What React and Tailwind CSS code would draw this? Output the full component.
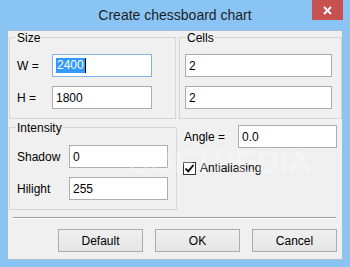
import React from "react";

const font = { fontFamily: '"Liberation Sans", Arial, sans-serif' };

const GroupBox = ({ label, className, children }) => (
  <div className={`relative border border-[#d5d5d5] ${className}`}>
    <span className="absolute left-[6px] top-[-7px] bg-[#f0f0f0] px-[1px] text-[12px] leading-[14px] text-black">
      {label}
    </span>
    {children}
  </div>
);

const Field = ({ value, className = "", focused = false }) => (
  <div
    className={`flex h-[23px] items-center bg-white pl-[3px] text-[12px] text-black border ${
      focused ? "border-[#7eb4ea]" : "border-[#abadb3]"
    } ${className}`}
  >
    {focused ? (
      <span className="flex items-center">
        <span className="bg-[#3399ff] px-[1px] leading-[15px] text-white">{value}</span>
        <span className="h-[15px] w-[1px] bg-black" />
      </span>
    ) : (
      value
    )}
  </div>
);

const Button = ({ children }) => (
  <button className="flex h-[23px] w-[85px] items-center justify-center border border-[#acacac] bg-gradient-to-b from-[#f0f0f0] to-[#e5e5e5] text-[12px] text-black">
    {children}
  </button>
);

export default function App() {
  return (
    <div style={font} className="relative h-[267px] w-[350px] overflow-hidden bg-[#8ac4f5]">
      {/* title bar */}
      <div className="flex h-[30px] items-start">
        <div className="w-[43px]" />
        <div className="flex-1 pt-[6px] text-center text-[14px] leading-[18px] text-[#1e1e1e]">
          Create chessboard chart
        </div>
        <div className="ml-[5px] mr-[7px] flex h-[20px] w-[31px] items-center justify-center bg-[#c75050]">
          <svg width="9" height="9" viewBox="0 0 9 9">
            <path d="M1 1L8 8M8 1L1 8" stroke="white" strokeWidth="1.8" />
          </svg>
        </div>
      </div>

      {/* client area */}
      <div className="mx-[7px] h-[230px] border border-[#a7bdd2] bg-[#f0f0f0]">
        <div className="mt-[6px] flex gap-[3px] pl-[1px]">
          <GroupBox label="Size" className="h-[82px] w-[167px] pt-[16px] pl-[7px]">
            <div className="flex items-center">
              <span className="w-[35px] text-[12px]">W =</span>
              <Field value="2400" focused className="w-[100px]" />
            </div>
            <div className="mt-[9px] flex items-center">
              <span className="w-[35px] text-[12px]">H =</span>
              <Field value="1800" className="w-[100px]" />
            </div>
          </GroupBox>
          <GroupBox label="Cells" className="h-[82px] w-[163px] pt-[16px] pl-[5px]">
            <Field value="2" className="w-[147px]" />
            <Field value="2" className="mt-[9px] w-[147px]" />
          </GroupBox>
        </div>

        <div className="mt-[8px] flex pl-[1px]">
          <GroupBox label="Intensity" className="h-[83px] w-[168px] pt-[17px] pl-[7px]">
            <div className="flex items-center">
              <span className="w-[52px] text-[12px]">Shadow</span>
              <Field value="0" className="w-[99px]" />
            </div>
            <div className="mt-[9px] flex items-center">
              <span className="w-[52px] text-[12px]">Hilight</span>
              <Field value="255" className="w-[99px]" />
            </div>
          </GroupBox>
          <div className="ml-[6px]">
            <div className="-mt-[2px] flex items-center">
              <span className="w-[55px] pl-[1px] text-[12px]">Angle =</span>
              <Field value="0.0" className="w-[99px]" />
            </div>
            <div className="mt-[11px] flex items-center">
              <div className="flex h-[13px] w-[13px] items-center justify-center border border-[#333] bg-white">
                <svg width="11" height="11" viewBox="0 0 11 11">
                  <path d="M1.5 5.5L4.2 8.3L9.5 2" fill="none" stroke="black" strokeWidth="1.8" />
                </svg>
              </div>
              <span className="ml-[4px] text-[12px]">Antialiasing</span>
            </div>
          </div>
        </div>

        {/* separator */}
        <div className="mx-[5px] mt-[7px] h-[2px] w-[323px] border-t border-b border-t-[#a0a0a0] border-b-white" />

        <div className="mt-[10px] flex justify-end gap-[12px] pr-[5px]">
          <Button>Default</Button>
          <Button>OK</Button>
          <Button>Cancel</Button>
        </div>
      </div>

      {/* faint watermark */}
      <div className="pointer-events-none absolute left-[128px] top-[142px] whitespace-nowrap text-[32px] font-bold leading-[40px] text-white/30">
        SOFTPEDIA
      </div>
    </div>
  );
}
